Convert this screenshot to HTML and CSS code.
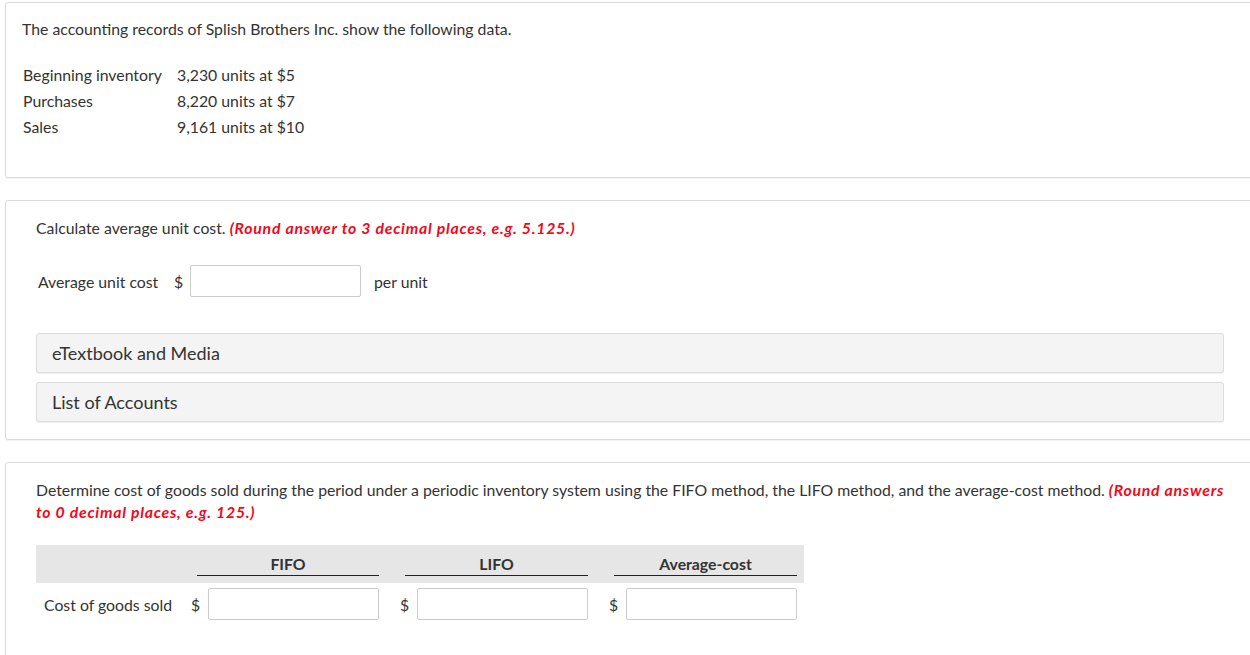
FILE: index.html
```html
<!DOCTYPE html>
<html>
<head>
<meta charset="utf-8">
<link rel="stylesheet" href="styles.css">
</head>
<body>
<div class="page">
  <section class="panel panel-intro">
    <p class="lead">The accounting records of Splish Brothers Inc. show the following data.</p>
    <table class="data">
      <tr><td class="dlabel">Beginning inventory</td><td>3,230 units at $5</td></tr>
      <tr><td class="dlabel">Purchases</td><td>8,220 units at $7</td></tr>
      <tr><td class="dlabel">Sales</td><td>9,161 units at $10</td></tr>
    </table>
  </section>

  <section class="panel panel-q">
    <p class="lead">Calculate average unit cost. <em class="hint">(Round answer to 3 decimal places, e.g. 5.125.)</em></p>
    <div class="answer-row">
      <span class="alabel">Average unit cost</span>
      <span class="dollar">$</span>
      <span class="input"></span>
      <span class="unit">per unit</span>
    </div>
    <div class="accordions">
      <div class="acc">eTextbook and Media</div>
      <div class="acc">List of Accounts</div>
    </div>
  </section>

  <section class="panel panel-q panel-last">
    <p class="lead wrap">Determine cost of goods sold during the period under a periodic inventory system using the FIFO method, the LIFO method, and the average-cost method. <em class="hint">(Round answers to 0 decimal places, e.g. 125.)</em></p>
    <div class="grid">
      <div class="ghead">
        <div class="hcell h1">FIFO</div>
        <div class="hcell h2">LIFO</div>
        <div class="hcell h3">Average-cost</div>
      </div>
      <div class="grow">
        <span class="glabel">Cost of goods sold</span>
        <span class="gdollar">$</span><span class="input ginput"></span>
        <span class="gap"></span>
        <span class="gdollar">$</span><span class="input ginput"></span>
        <span class="gap"></span>
        <span class="gdollar">$</span><span class="input ginput"></span>
      </div>
    </div>
  </section>
</div>
</body>
</html>
```

FILE: styles.css
```css
html, body {
  margin: 0;
  padding: 0;
  background: #fff;
  overflow: hidden;
}
body {
  font-family: Lato, "Open Sans", sans-serif;
  color: #333;
  font-size: 15.8px;
}
.page {
  padding: 2px 0 0 5px;
}
.panel {
  width: 1250px;
  box-sizing: border-box;
  border: 1px solid #dadada;
  border-radius: 3px;
  box-shadow: 0 1px 1px rgba(0,0,0,0.05);
  margin-bottom: 22px;
}
.panel-intro {
  height: 176px;
  padding: 16px 16px 0 16px;
}
.lead {
  margin: 0;
  line-height: 20px;
}
.data {
  border-collapse: collapse;
  margin-top: 23px;
  margin-left: 1px;
}
.data td {
  padding: 0;
  height: 26px;
  line-height: 26px;
  white-space: nowrap;
}
.data .dlabel {
  width: 154px;
}
.hint {
  color: #f2071b;
  font-weight: 700;
  font-style: italic;
  letter-spacing: 0.75px;
}
.panel-q {
  padding: 17px 30px 17px 30px;
}
.answer-row {
  display: flex;
  align-items: center;
  margin-top: 27px;
  margin-left: 2px;
  height: 32px;
}
.alabel {
  width: 136px;
}
.dollar {
  width: 16px;
}
.input {
  display: block;
  box-sizing: border-box;
  width: 171px;
  height: 32px;
  border: 1px solid #ccc;
  border-radius: 2px;
  background: #fff;
}
.unit {
  margin-left: 13px;
}
.accordions {
  margin-top: 36px;
  display: flex;
  flex-direction: column;
  gap: 9px;
}
.acc {
  height: 40px;
  box-sizing: border-box;
  border: 1px solid #dcdcdc;
  border-radius: 3px;
  background: #f4f4f4;
  font-size: 18px;
  line-height: 38px;
  padding-left: 15px;
  box-shadow: 0 1px 1px rgba(0,0,0,0.06);
}
.panel-last {
  height: 200px;
  padding-top: 16px;
}
.lead.wrap {
  line-height: 22px;
  margin-right: -10px;
}
.grid {
  margin-top: 22px;
  width: 768px;
}
.ghead {
  display: grid;
  grid-template-columns: 152px 20px 171px 18px 20px 171px 18px 20px 171px 8px;
  background: #e6e6e6;
  height: 38px;
  box-sizing: border-box;
  padding-top: 9px;
}
.hcell {
  font-weight: 700;
  text-align: center;
  line-height: 20px;
  border-bottom: 1px solid #222;
  box-sizing: border-box;
  height: 22px;
}
.h1 { grid-column: 2 / 4; margin-left: 9px; }
.h2 { grid-column: 5 / 7; margin-left: 8px; }
.h3 { grid-column: 8 / 10; margin-left: 8px; }
.grow {
  display: grid;
  grid-template-columns: 152px 20px 171px 18px 20px 171px 18px 20px 171px 8px;
  align-items: center;
  margin-top: 5px;
  height: 32px;
}
.glabel {
  padding-left: 8px;
}
.gdollar {
  padding-left: 3px;
}
```
